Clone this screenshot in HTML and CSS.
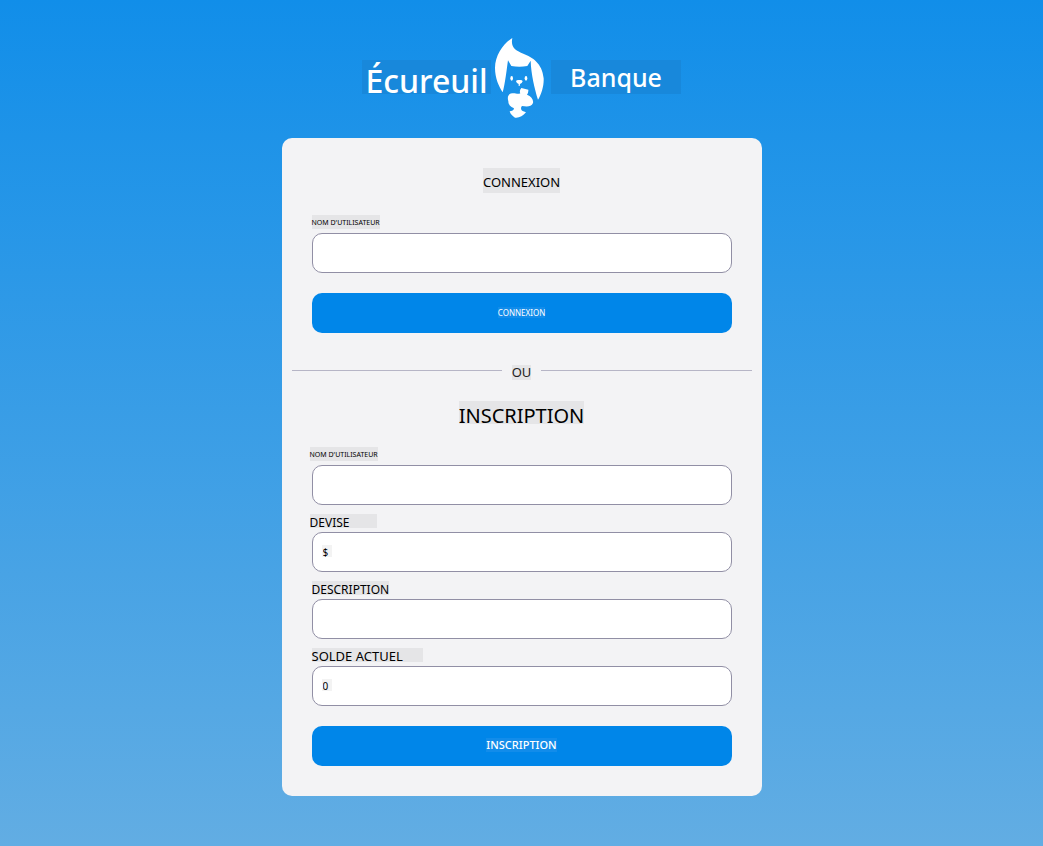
FILE: index.html
```html
<!DOCTYPE html>
<html lang="fr">
<head>
<meta charset="utf-8">
<meta name="viewport" content="width=device-width, initial-scale=1">
<title>Écureuil Banque</title>
<link rel="stylesheet" href="styles.css">
</head>
<body>
<header class="brand">
  <span class="brand-name brand-first">Écureuil</span>
  <svg class="logo" viewBox="30 24 147 240" aria-hidden="true">
    <path d="M82 24C58 38 30 74 30 114C30 145 42 170 53 187C60 164 66 112 69 91L79 108Q103 112 127 108L137 92C138 130 149 178 159 209C170 192 177 165 176 145C172 99 142 82 115 71C92 61 76 52 82 24Z"/>
    <ellipse cx="80" cy="145" rx="4" ry="7"/>
    <ellipse cx="123" cy="145" rx="4" ry="7"/>
    <path d="M93 154Q94 149 103 150Q112 149 113 154Q111 160 105 162L104 168H101L101 162Q95 160 93 154Z"/>
    <path d="M109 174L130 179Q131 187 126 194C139 199 146 209 144 219C139 232 123 230 111 228C106 233 108 241 113 243L123 247C114 258 101 265 90 263C82 258 76 252 74 244C81 243 86 242 87 235C76 231 70 224 70 214C66 200 70 191 82 190C92 189 98 194 106 190Q102 183 109 174Z"/>
  </svg>
  <span class="brand-name brand-second">Banque</span>
</header>
<main class="card">
  <form class="form">
    <h1 class="title"><span class="mark">CONNEXION</span></h1>
    <div class="field">
      <label class="label label-small" for="login-user"><span class="mark">NOM D'UTILISATEUR</span></label>
      <input class="input" id="login-user" type="text">
    </div>
    <button class="button button-small" type="button"><span class="mark-light">CONNEXION</span></button>
  </form>
  <div class="divider"><span class="mark">OU</span></div>
  <form class="form">
    <h2 class="title title-large"><span class="mark">INSCRIPTION</span></h2>
    <div class="field">
      <label class="label label-small label-outset" for="user"><span class="mark">NOM D'UTILISATEUR</span></label>
      <input class="input" id="user" type="text">
    </div>
    <div class="field">
      <label class="label label-outset" for="currency"><span class="mark mark-medium">DEVISE</span></label>
      <input class="input input-filled" id="currency" type="text" value="$">
    </div>
    <div class="field">
      <label class="label" for="description"><span class="mark">DESCRIPTION</span></label>
      <input class="input" id="description" type="text">
    </div>
    <div class="field">
      <label class="label label-big" for="balance"><span class="mark mark-wide">SOLDE ACTUEL</span></label>
      <input class="input input-filled" id="balance" type="text" value="0">
    </div>
    <button class="button" type="button"><span class="mark-light">INSCRIPTION</span></button>
  </form>
</main>
</body>
</html>
```
FILE: styles.css
```css
* {
  box-sizing: border-box;
}

body {
  margin: 0;
  min-height: 100vh;
  padding: 38px 20px 50px;
  background: linear-gradient(#118ee9, #62ade3);
  font-family: "Noto Sans", sans-serif;
  color: #000;
}

.brand {
  display: flex;
  justify-content: center;
  align-items: center;
  height: 80px;
  margin-bottom: 20px;
}

.brand-name {
  background: #1888db;
  color: #fff;
  height: 34px;
  margin-bottom: 3px;
  font-weight: 500;
  text-align: center;
}

.brand-first {
  width: 129px;
  margin-right: 4px;
  font-size: 32px;
  line-height: 42px;
}

.brand-second {
  width: 130px;
  margin-left: 7px;
  font-size: 25px;
  line-height: 34px;
}

.logo {
  width: 49px;
  height: 80px;
  fill: #fff;
}

.card {
  max-width: 480px;
  margin: 0 auto;
  padding: 30px;
  border-radius: 10px;
  background: #f3f3f5;
}

.form {
  display: flex;
  flex-direction: column;
  gap: 9px;
}

.title {
  display: flex;
  justify-content: center;
  margin: 0 0 13px;
  font-size: 13px;
  font-weight: 400;
  line-height: 25px;
}

.title .mark {
  height: 25px;
  line-height: 29px;
}

.title-large {
  height: 25px;
  margin-bottom: 12px;
  font-size: 20px;
}

.title-large .mark {
  height: 23px;
}

.mark {
  background: #e5e5e7;
}

.mark-medium {
  width: 67px;
}

.mark-wide {
  width: 111px;
}

.mark-light {
  background: #128cea;
}

.label {
  display: flex;
  align-items: flex-start;
  height: 18px;
  font-size: 12px;
  line-height: 17px;
}

.label .mark {
  height: 14px;
}

.label-small {
  font-size: 7px;
  line-height: 16px;
}

.label-big {
  font-size: 13px;
}

.label-outset {
  margin-left: -2px;
}

.input {
  display: block;
  width: 100%;
  height: 40px;
  padding: 0 10px;
  border: 1px solid #918fa5;
  border-radius: 10px;
  background: #fff;
  font: 10px "Noto Sans", sans-serif;
}

.input-filled {
  background: linear-gradient(#f3f3f3, #f3f3f3) 9px 12px / 10px 12px no-repeat #fff;
}

.button {
  display: flex;
  align-items: center;
  justify-content: center;
  height: 40px;
  margin-top: 11px;
  padding: 0 0 2px;
  border: 0;
  border-radius: 10px;
  background: #0086e9;
  color: #fff;
  font: 500 11px/14px "Noto Sans", sans-serif;
}

.button-small {
  font-size: 8px;
  font-weight: 400;
  line-height: 11px;
}

.divider {
  display: flex;
  align-items: center;
  gap: 10px;
  margin: 32px -20px 21px;
  font-size: 13px;
  line-height: 15px;
  color: #222;
}

.divider::before,
.divider::after {
  content: "";
  flex: 1;
  height: 1px;
  margin-bottom: 4px;
  background: #b6b5c6;
}
```
